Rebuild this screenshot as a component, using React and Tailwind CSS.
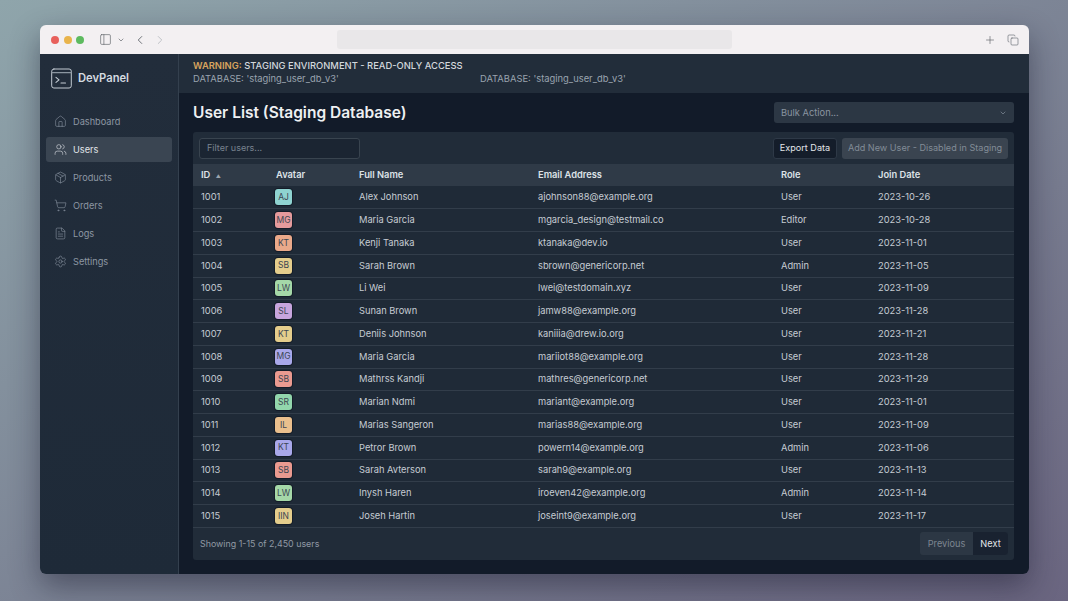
import { ChevronDown, ChevronLeft, ChevronRight, Copy, FileText, House, Package, PanelLeft, Plus, Settings, ShoppingCart, Users } from "lucide-react";

const navItems = [
    { label: "Dashboard", icon: House },
    { label: "Users", icon: Users, active: true },
    { label: "Products", icon: Package },
    { label: "Orders", icon: ShoppingCart },
    { label: "Logs", icon: FileText },
    { label: "Settings", icon: Settings },
];

const teal = "bg-[#8fd3d1]";
const rose = "bg-[#e59a9c]";
const peach = "bg-[#eaa98a]";
const sand = "bg-[#e4cd8c]";
const green = "bg-[#a5d8a8]";
const lilac = "bg-[#c7a5dd]";
const periwinkle = "bg-[#a9a8ea]";
const salmon = "bg-[#ea9a90]";
const mint = "bg-[#92d6ac]";
const apricot = "bg-[#eabf8d]";

const users = [
    [1001, "AJ", teal, "Alex Johnson", "ajohnson88@example.org", "User", "2023-10-26"],
    [1002, "MG", rose, "Maria Garcia", "mgarcia_design@testmail.co", "Editor", "2023-10-28"],
    [1003, "KT", peach, "Kenji Tanaka", "ktanaka@dev.io", "User", "2023-11-01"],
    [1004, "SB", sand, "Sarah Brown", "sbrown@genericorp.net", "Admin", "2023-11-05"],
    [1005, "LW", green, "Li Wei", "lwei@testdomain.xyz", "User", "2023-11-09"],
    [1006, "SL", lilac, "Sunan Brown", "jamw88@example.org", "User", "2023-11-28"],
    [1007, "KT", sand, "Deniis Johnson", "kaniiia@drew.io.org", "User", "2023-11-21"],
    [1008, "MG", periwinkle, "Maria Garcia", "mariiot88@example.org", "User", "2023-11-28"],
    [1009, "SB", salmon, "Mathrss Kandji", "mathres@genericorp.net", "User", "2023-11-29"],
    [1010, "SR", mint, "Marian Ndmi", "mariant@example.org", "User", "2023-11-01"],
    [1011, "IL", apricot, "Marias Sangeron", "marias88@example.org", "User", "2023-11-09"],
    [1012, "KT", periwinkle, "Petror Brown", "powern14@example.org", "Admin", "2023-11-06"],
    [1013, "SB", salmon, "Sarah Avterson", "sarah9@example.org", "User", "2023-11-13"],
    [1014, "LW", green, "Inysh Haren", "iroeven42@example.org", "Admin", "2023-11-14"],
    [1015, "IIN", sand, "Joseh Hartin", "joseint9@example.org", "User", "2023-11-17"],
];

// Terminal window mark next to the product name
function Logo() {
    return (
        <svg width="21" height="21" viewBox="0 0 21 21" fill="none" stroke="#c3cbd3" strokeWidth="1" strokeLinecap="round" strokeLinejoin="round">
            <rect x="0.7" y="1" width="19.6" height="19" rx="2.2" />
            <path d="M1 4.6h19" stroke="#8b96a1" strokeWidth="1.4" />
            <path d="M5 9.4l3 2.5-3 2.5M10 15h4.5" strokeWidth="1.1" />
        </svg>
    );
}

function Sidebar() {
    return (
        <aside className="flex w-[139px] shrink-0 flex-col border-r border-[#34404e] bg-gradient-to-b from-[#222d3b] to-[#1e2a38]">
            <div className="flex h-[48px] items-center gap-[6px] pl-[11px]">
                <Logo />
                <span className="text-[11.2px] font-semibold text-[#d5dbe1]">DevPanel</span>
            </div>
            <nav className="mt-[7px] flex flex-col gap-[3px] px-[6px]">
                {navItems.map((item) => {
                    const NavIcon = item.icon;
                    return (
                        <div
                            key={item.label}
                            className={`flex h-[25px] items-center gap-[6px] rounded-[3px] pl-[8px] text-[9.2px] ${item.active ? "bg-[#3a4552] text-[#e2e6ea]" : "text-[#8d97a3]"}`}
                        >
                            <NavIcon size={13} strokeWidth={1.1} />
                            <span>{item.label}</span>
                        </div>
                    );
                })}
            </nav>
        </aside>
    );
}

function UserTable() {
    return (
        <table className="w-full table-fixed border-collapse text-left text-[9.3px]">
            <colgroup>
                <col className="w-[75px]" />
                <col className="w-[83px]" />
                <col className="w-[179px]" />
                <col className="w-[243px]" />
                <col className="w-[97px]" />
                <col />
            </colgroup>
            <thead>
                <tr className="h-[22px] bg-[#2f3a47] text-[#dde2e7]">
                    <th className="pl-[8px] font-semibold">
                        ID <span className="ml-[3px] text-[5px] text-[#9aa4af]">▲</span>
                    </th>
                    <th className="pl-[8px] font-semibold">Avatar</th>
                    <th className="pl-[8px] font-semibold">Full Name</th>
                    <th className="pl-[8px] font-semibold">Email Address</th>
                    <th className="pl-[8px] font-semibold">Role</th>
                    <th className="pl-[8px] font-semibold">Join Date</th>
                </tr>
            </thead>
            <tbody className="text-[#c6ccd3]">
                {users.map(([id, initials, color, name, email, role, date]) => (
                    <tr key={id} className="h-[22.75px] border-b border-[#323d4a] bg-[#1f2a37]">
                        <td className="pl-[8px]">{id}</td>
                        <td className="pl-[7px]">
                            <div className={`flex h-[16px] w-[17px] items-center justify-center rounded-[3px] text-[8.5px] text-[#3c4652] ring-1 ring-[#141c28] ${color}`}>
                                {initials}
                            </div>
                        </td>
                        <td className="pl-[8px]">{name}</td>
                        <td className="pl-[8px]">{email}</td>
                        <td className="pl-[8px]">{role}</td>
                        <td className="pl-[8px]">{date}</td>
                    </tr>
                ))}
            </tbody>
        </table>
    );
}

export default function App() {
    return (
        <div className="flex h-[601px] w-[1068px] items-start overflow-hidden bg-gradient-to-br from-[#8fa5ab] to-[#6a6580] pl-[40px] pt-[25px] font-['Inter',sans-serif]">
            <div className="flex h-[549px] w-[989px] flex-col overflow-hidden rounded-[6px] shadow-[0_12px_30px_rgba(20,20,40,0.45)]">
                {/* Browser chrome */}
                <header className="flex h-[29px] shrink-0 items-center bg-[#f3f0f2] pl-[11px] pr-[10px]">
                    <div className="flex gap-[4.5px]">
                        <span className="h-[8px] w-[8px] rounded-full bg-[#e8605c]" />
                        <span className="h-[8px] w-[8px] rounded-full bg-[#e9b44c]" />
                        <span className="h-[8px] w-[8px] rounded-full bg-[#5dba5f]" />
                    </div>
                    <PanelLeft size={13} strokeWidth={1.2} className="ml-[15px] text-[#5d6268]" />
                    <ChevronDown size={8} strokeWidth={2} className="ml-[5px] text-[#5d6268]" />
                    <ChevronLeft size={14} strokeWidth={1.5} className="ml-[8px] text-[#5d6268]" />
                    <ChevronRight size={14} strokeWidth={1.5} className="ml-[6px] text-[#b8bcc0]" />
                    <div className="ml-[170px] h-[19px] w-[395px] rounded-[3px] bg-[#e9e7e9]" />
                    <Plus size={12} strokeWidth={1.3} className="ml-auto text-[#5d6268]" />
                    <Copy size={12} strokeWidth={1.2} className="ml-[11px] text-[#5d6268]" />
                </header>

                <div className="flex min-h-0 flex-1">
                    <Sidebar />
                    <div className="flex min-w-0 flex-1 flex-col bg-[#121b29]">
                        {/* Environment banner */}
                        <div className="h-[39px] shrink-0 bg-[#222d3a] pl-[14px] pt-[5px] text-[9.4px] leading-[13px]">
                            <div className="font-medium text-[#d3d8dd]">
                                <span className="font-semibold text-[#d7a45e]">WARNING:</span> STAGING ENVIRONMENT - READ-ONLY ACCESS
                            </div>
                            <div className="flex text-[#9aa4af]">
                                <span className="w-[287px]">DATABASE: 'staging_user_db_v3'</span>
                                <span>DATABASE: 'staging_user_db_v3'</span>
                            </div>
                        </div>

                        <main className="flex min-h-0 flex-1 flex-col pl-[14px] pr-[15px]">
                            <div className="flex h-[39px] shrink-0 items-center justify-between">
                                <h1 className="text-[15.5px] font-semibold text-[#eef0f2]">User List (Staging Database)</h1>
                                <div className="flex h-[21px] w-[240px] items-center justify-between rounded-[3px] bg-[#2c3744] px-[7px] text-[9.3px] text-[#8a94a0]">
                                    <span>Bulk Action...</span>
                                    <ChevronDown size={8} />
                                </div>
                            </div>

                            <section className="flex flex-col rounded-[3px] bg-[#212c39]">
                                <div className="flex h-[32px] items-center justify-between px-[6px]">
                                    <div className="flex h-[21px] w-[161px] items-center rounded-[3px] border border-[#39444f] bg-[#1b2532] pl-[7px] text-[9px] text-[#79838f]">
                                        Filter users...
                                    </div>
                                    <div className="flex gap-[5px] text-[9.1px]">
                                        <button className="h-[21px] w-[64px] rounded-[3px] border border-[#2e3947] bg-[#141d2a] text-[#e3e6ea]">Export Data</button>
                                        <button className="h-[21px] w-[166px] rounded-[3px] bg-[#3a4450] text-[#828c97]">Add New User - Disabled in Staging</button>
                                    </div>
                                </div>
                                <UserTable />
                                <div className="flex h-[32px] items-center justify-between pl-[7px] pr-[6px] text-[8.9px]">
                                    <span className="text-[#9099a4]">Showing 1-15 of 2,450 users</span>
                                    <div className="flex h-[23px] overflow-hidden rounded-[3px] bg-[#2c3744] text-[9.2px]">
                                        <span className="flex w-[53px] items-center justify-center text-[#7c8691]">Previous</span>
                                        <span className="flex w-[35px] items-center justify-center bg-[#192230] text-[#e3e6ea]">Next</span>
                                    </div>
                                </div>
                            </section>
                        </main>
                    </div>
                </div>
            </div>
        </div>
    );
}
